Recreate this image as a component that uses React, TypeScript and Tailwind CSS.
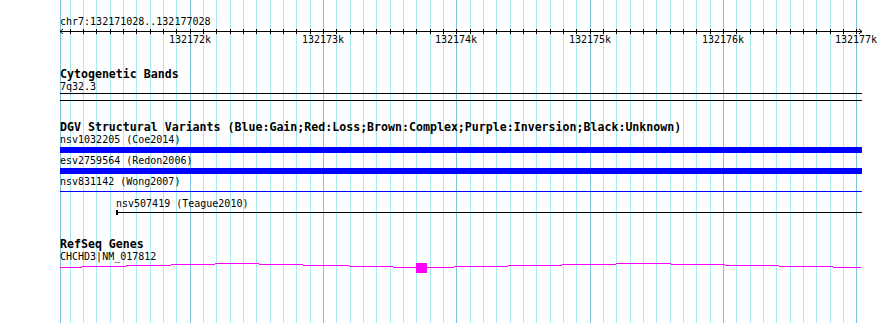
import React from "react"

const START = 132171028
const END = 132177028
const LEFT = 60
const SPAN = 800

const toX = (p: number) => LEFT + ((p - START) * SPAN) / (END - START)

const ticks: { x: number; major: boolean; p: number }[] = []
for (let p = 132171100; p <= END; p += 100) {
  ticks.push({ x: Math.round(toX(p)), major: p % 1000 === 0, p })
}

// stepped RefSeq transcript line
const gene: [number, number, number][] = [
  [60, 82, 4], [82, 126, 3], [126, 171, 2], [171, 215, 1], [215, 259, 0],
  [259, 303, 1], [303, 349, 2], [349, 393, 3], [393, 454, 4], [454, 508, 3],
  [508, 562, 2], [562, 616, 1], [616, 671, 0], [671, 725, 1], [725, 779, 2],
  [779, 833, 3], [833, 861, 4],
]

function Grid() {
  return (
    <svg className="absolute inset-0" width={890} height={323} shapeRendering="crispEdges">
      <rect x={60} y={0} width={1} height={323} fill="#7cc4e4" />
      {ticks.map((t) => (
        <rect key={t.p} x={t.x} y={0} width={1} height={323} fill={t.major ? "#7cc4e4" : "#a8eaef"} />
      ))}
    </svg>
  )
}

function Label({ children, indent = 60 }: { children: React.ReactNode; indent?: number }) {
  return (
    <div className="h-[12px] text-[10px] leading-[12px] whitespace-nowrap" style={{ paddingLeft: indent }}>
      {children}
    </div>
  )
}

function Title({ children }: { children: React.ReactNode }) {
  return <div className="h-[13px] pl-[60px] text-[11.6px] font-bold leading-[13px] whitespace-nowrap">{children}</div>
}

export default function App() {
  return (
    <div className="relative h-[323px] w-[890px] overflow-hidden bg-white font-['DejaVu_Sans_Mono',monospace] text-black">
      <Grid />

      <div className="relative flex flex-col pt-[16px]">
        <Label>chr7:132171028..132177028</Label>

        <svg width={890} height={6} shapeRendering="crispEdges" className="block">
          <rect x={60} y={3} width={802} height={1} fill="#000" />
          {ticks.map((t) => (
            <rect key={t.p} x={t.x} y={1} width={1} height={5} fill="#000" />
          ))}
          <path d="M60 3.5 L63 1 M60 3.5 L63 6" stroke="#000" strokeWidth={1} fill="none" shapeRendering="auto" />
          <path d="M862 3.5 L859 1 M862 3.5 L859 6" stroke="#000" strokeWidth={1} fill="none" shapeRendering="auto" />
        </svg>

        <div className="relative h-[12px] text-[10px] leading-[12px]">
          {ticks
            .filter((t) => t.major)
            .map((t) => (
              <span key={t.p} className="absolute top-0 -translate-x-1/2 whitespace-nowrap" style={{ left: t.x }}>
                {t.p / 1000}k
              </span>
            ))}
        </div>

        <div className="mt-[22px]">
          <Title>Cytogenetic Bands</Title>
        </div>
        <Label>7q32.3</Label>
        <div className="ml-[60px] h-px w-[802px] bg-black" />
        <div className="ml-[60px] mt-[6px] h-px w-[802px] bg-black" />

        <div className="mt-[20px]">
          <Title>DGV Structural Variants (Blue:Gain;Red:Loss;Brown:Complex;Purple:Inversion;Black:Unknown)</Title>
        </div>
        <Label>nsv1032205 (Coe2014)</Label>
        <div className="ml-[60px] mt-px h-[6px] w-[802px] bg-[#0000ff]" />
        <div className="mt-[2px]">
          <Label>esv2759564 (Redon2006)</Label>
        </div>
        <div className="ml-[60px] mt-px h-[6px] w-[802px] bg-[#0000ff]" />
        <div className="mt-[2px]">
          <Label>nsv831142 (Wong2007)</Label>
        </div>
        <div className="ml-[60px] mt-[3px] h-px w-[802px] bg-[#0000ff]" />
        <div className="mt-[6px]">
          <Label indent={116}>nsv507419 (Teague2010)</Label>
        </div>
        <svg width={890} height={5} shapeRendering="crispEdges" className="block">
          <rect x={116} y={2} width={746} height={1} fill="#000" />
          <rect x={116} y={0} width={2} height={5} fill="#000" />
        </svg>

        <div className="mt-[23px]">
          <Title>RefSeq Genes</Title>
        </div>
        <Label>CHCHD3|NM_017812</Label>
        <svg width={890} height={12} shapeRendering="crispEdges" className="block">
          {gene.map(([a, b, y], i) => (
            <rect key={i} x={a} y={y} width={b - a} height={1} fill="#ff00ff" />
          ))}
          <rect x={416} y={0} width={11} height={10} fill="#ff00ff" />
        </svg>
      </div>
    </div>
  )
}
